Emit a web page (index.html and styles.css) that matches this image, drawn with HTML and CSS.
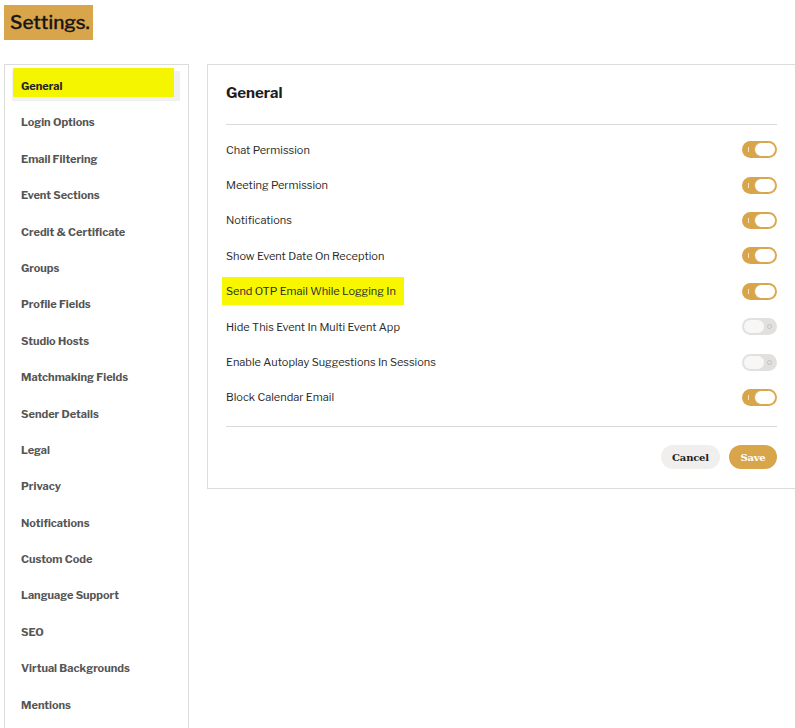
FILE: index.html
```html
<!DOCTYPE html>
<html lang="en">
<head>
    <meta charset="UTF-8">
    <meta name="viewport" content="width=device-width, initial-scale=1.0">
    <title>Settings</title>
    <link rel="stylesheet" href="styles.css">
</head>
<body>
    <div class="page-title"><h1>Settings.</h1></div>

    <div class="layout">
        <ul class="sidebar">
            <li class="active"><span>General</span></li>
            <li>Login Options</li>
            <li>Email Filtering</li>
            <li>Event Sections</li>
            <li>Credit &amp; Certificate</li>
            <li>Groups</li>
            <li>Profile Fields</li>
            <li>Studio Hosts</li>
            <li>Matchmaking Fields</li>
            <li>Sender Details</li>
            <li>Legal</li>
            <li>Privacy</li>
            <li>Notifications</li>
            <li>Custom Code</li>
            <li>Language Support</li>
            <li>SEO</li>
            <li>Virtual Backgrounds</li>
            <li>Mentions</li>
        </ul>

        <div class="panel">
            <h2>General</h2>
            <div class="rows">
                <div class="row"><span>Chat Permission</span><span class="toggle on"></span></div>
                <div class="row"><span>Meeting Permission</span><span class="toggle on"></span></div>
                <div class="row"><span>Notifications</span><span class="toggle on"></span></div>
                <div class="row"><span>Show Event Date On Reception</span><span class="toggle on"></span></div>
                <div class="row"><span class="mark">Send OTP Email While Logging In</span><span class="toggle on"></span></div>
                <div class="row"><span>Hide This Event In Multi Event App</span><span class="toggle"></span></div>
                <div class="row"><span>Enable Autoplay Suggestions In Sessions</span><span class="toggle"></span></div>
                <div class="row"><span>Block Calendar Email</span><span class="toggle on"></span></div>
            </div>
            <div class="actions">
                <button class="btn cancel">Cancel</button>
                <button class="btn save">Save</button>
            </div>
        </div>
    </div>
</body>
</html>
```

FILE: styles.css
```css
body { margin: 0; font-family: "Libre Franklin", Lato, "Liberation Sans", sans-serif; color: #222; background: #fff; overflow: hidden; height: 728px; }

.page-title { padding: 5px 4px 0; }
.page-title h1 { display: inline-block; margin: 0; background: #d9a54b; color: #161616; font-size: 19px; font-weight: 500; height: 35px; line-height: 35px; padding: 0 6px 0 6px; width: 77px; -webkit-text-stroke: 0.3px #161616; }

.layout { display: flex; align-items: flex-start; margin-top: 24px; padding-left: 4px; }

.sidebar { list-style: none; margin: 0; width: 169px; padding: 6px 7px 0; border: 1px solid #dcdcdc; height: 700px; display: flex; flex-direction: column; gap: 6.4px; }
.sidebar li { height: 30px; line-height: 30px; padding-left: 9px; font-size: 11px; font-weight: 700; color: #555; position: relative; }
.sidebar li.active { background: #f0f0f0; color: #222; width: 159px; }
.sidebar li.active::before { content: ""; position: absolute; left: 1px; top: -3px; width: 161px; height: 29px; background: #f5f500; }
.sidebar li span { position: relative; }

.panel { margin-left: 18px; margin-right: -20px; flex: 1; border: 1px solid #dcdcdc; padding: 18px 37px 19px 18px; }
.panel h2 { margin: 0; font-size: 15px; line-height: 20px; font-weight: 700; color: #1d1d1d; padding-bottom: 21px; border-bottom: 1px solid #d9d9d9; }

.rows { padding: 7px 0 11px; border-bottom: 1px solid #d9d9d9; }
.row { height: 35.4px; display: flex; align-items: center; justify-content: space-between; font-size: 11px; color: #2a2a2a; }
.row .mark { background: #f7f700; padding: 7px 8px 7px 4px; margin-left: -4px; }

.toggle { width: 35px; height: 17px; border-radius: 9px; background: #e2e0de; position: relative; flex: none; }
.toggle::before { content: ""; position: absolute; top: 1px; left: 1px; width: 20px; height: 13px; border-radius: 8px; background: #f7f7f7; border: 1px solid #e2e0de; }
.toggle::after { content: ""; position: absolute; top: 6px; right: 5px; width: 3px; height: 3px; border-radius: 50%; border: 1px solid #c4c2c0; }
.toggle.on { background: #d9a54b; }
.toggle.on::before { left: auto; right: 1px; background: #fff; border-color: #d9a54b; }
.toggle.on::after { right: auto; left: 6px; top: 6px; width: 1px; height: 5px; border: none; border-radius: 0; background: #f6e7c8; }

.actions { display: flex; justify-content: flex-end; gap: 9px; padding-top: 18px; }
.btn { height: 24px; border: none; border-radius: 12px; font-family: "DejaVu Serif", "Liberation Serif", serif; font-weight: 700; font-size: 10px; letter-spacing: -0.2px; padding: 0 8px; cursor: pointer; }
.cancel { background: #f0efed; color: #1d1d1d; width: 59px; }
.save { background: #d9a54b; color: #fff; width: 48px; }
```
